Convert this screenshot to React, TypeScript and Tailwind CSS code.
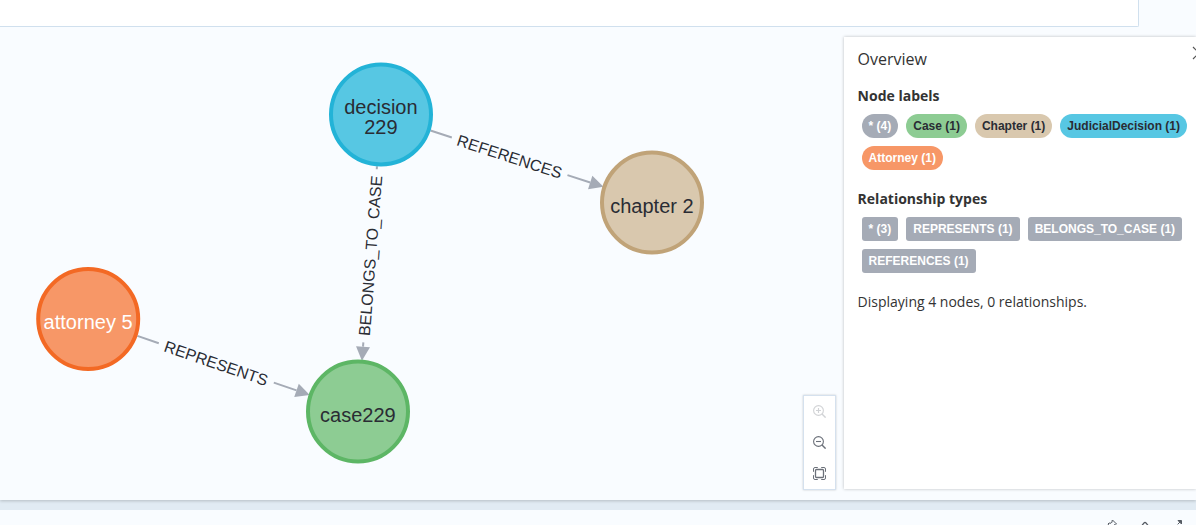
import React from "react";

type GraphNode = { id: string; x: number; y: number; fill: string; stroke: string; color: string; lines: { text: string; y: number }[] };

const nodes: GraphNode[] = [
  { id: "decision", x: 381, y: 114.4, fill: "#57C7E3", stroke: "#23B3D7", color: "#2A2C34", lines: [{ text: "decision", y: 114 }, { text: "229", y: 134 }] },
  { id: "chapter", x: 652, y: 202.6, fill: "#D9C8AE", stroke: "#C0A378", color: "#2A2C34", lines: [{ text: "chapter 2", y: 213 }] },
  { id: "attorney", x: 88.2, y: 319, fill: "#F79767", stroke: "#F36924", color: "#FFFFFF", lines: [{ text: "attorney 5", y: 329 }] },
  { id: "case", x: 358, y: 411.5, fill: "#8DCC93", stroke: "#5DB665", color: "#2A2C34", lines: [{ text: "case229", y: 422 }] },
];

type Edge = { from: number; to: number; label: string; width: number; flip?: boolean };

const edges: Edge[] = [
  { from: 0, to: 1, label: "REFERENCES", width: 109 },
  { from: 2, to: 3, label: "REPRESENTS", width: 109 },
  { from: 0, to: 3, label: "BELONGS_TO_CASE", width: 161, flip: true },
];

function Relationship({ edge }: { edge: Edge }) {
  const a = nodes[edge.from];
  const b = nodes[edge.to];
  const dx = b.x - a.x;
  const dy = b.y - a.y;
  const length = Math.hypot(dx, dy);
  const angle = (Math.atan2(dy, dx) * 180) / Math.PI;
  const start = 52;
  const tip = length - 51;
  const base = tip - 14;
  const mid = (start + base) / 2 - 0.7;
  const gap = edge.width / 2 + 6.3;
  return (
    <g transform={`translate(${a.x} ${a.y}) rotate(${angle})`}>
      <path d={`M${start} 0H${mid - gap}M${mid + gap} 0H${base}`} stroke="#A5ABB6" strokeWidth="2" />
      <path d={`M${tip} 0L${base} -7V7Z`} fill="#A5ABB6" />
      <text
        transform={edge.flip ? `translate(${mid} 0) rotate(180)` : `translate(${mid} 0)`}
        y="6"
        textAnchor="middle"
        fontSize="16"
        fill="#2A2C34"
      >
        {edge.label}
      </text>
    </g>
  );
}

const labels = [
  { text: "* (4)", style: "bg-[#A5ABB6] text-white" },
  { text: "Case (1)", style: "bg-[#8DCC93] text-[#2A2C34]" },
  { text: "Chapter (1)", style: "bg-[#D9C8AE] text-[#2A2C34]" },
  { text: "JudicialDecision (1)", style: "bg-[#57C7E3] text-[#2A2C34]" },
  { text: "Attorney (1)", style: "bg-[#F79767] text-white" },
];

const types = ["* (3)", "REPRESENTS (1)", "BELONGS_TO_CASE (1)", "REFERENCES (1)"];

const chip = "h-6 px-[7px] font-['Liberation_Sans',sans-serif] text-xs leading-6 font-bold whitespace-nowrap";

function ZoomIcon({ plus }: { plus?: boolean }) {
  return (
    <svg width="13" height="13" viewBox="0 0 13 13" fill="none" stroke="currentColor" strokeWidth="1.1">
      <circle cx="5.5" cy="5.5" r="4.9" />
      <path d={plus ? "M3 5.500h5M5.500 3v5" : "M3 5.500h5"} />
      <path d="M9 9L12.600 12.600" strokeWidth="1.4" />
    </svg>
  );
}

function FitIcon() {
  return (
    <svg width="13" height="13" viewBox="0 0 13 13" fill="none" stroke="currentColor" strokeWidth="1.3">
      <rect x="2.5" y="2.5" width="8" height="8" rx="1" />
      <path strokeWidth="1" d="M.5 4.800V2Q.5 .5 2 .5h2.800M8.200 .5H11Q12.500 .5 12.500 2v2.800M12.500 8.200V11Q12.500 12.500 11 12.500H8.200M4.800 12.500H2Q.5 12.500 .5 11V8.200" />
    </svg>
  );
}

export default function App() {
  return (
    <div className="flex h-[525px] w-[1196px] flex-col overflow-hidden bg-[#E1EBF3] font-['Open_Sans',sans-serif] text-[#333333]">
      <main className="z-10 flex h-[500px] shrink-0 flex-col bg-[#F9FCFF] shadow-[0_1px_3px_rgba(0,0,0,0.2)]">
        <div className="h-[27px] w-[1139px] shrink-0 rounded-br-xs border-r border-b border-[#D0E0EE] bg-white" />
        <div className="flex h-[473px]">
          <svg className="h-[473px] w-[803px] shrink-0 font-['Liberation_Sans',Arial,sans-serif]" viewBox="0 27 803 473">
            {edges.map((edge) => (
              <Relationship key={edge.label} edge={edge} />
            ))}
            {nodes.map((node) => (
              <g key={node.id}>
                <circle cx={node.x} cy={node.y} r="50" fill={node.fill} stroke={node.stroke} strokeWidth="4" />
                {node.lines.map((line) => (
                  <text key={line.text} x={node.x - 0.1} y={line.y} textAnchor="middle" fontSize="20" fill={node.color}>
                    {line.text}
                  </text>
                ))}
              </g>
            ))}
          </svg>
          <div className="mb-[10px] flex h-[95px] w-[33px] shrink-0 flex-col items-center gap-[18px] self-end border border-[#D5E1EE] bg-white pt-[9px] text-[#6B7079] shadow-[0_0_2px_rgba(0,0,0,0.2)]">
            <span className="h-[13px] opacity-30"><ZoomIcon plus /></span>
            <ZoomIcon />
            <FitIcon />
          </div>
          <aside className="mt-[10px] ml-2 flex h-[452px] w-[352px] shrink-0 flex-col bg-white pt-px pl-[13.6px] shadow-[0_0_3px_rgba(0,0,0,0.25)]">
            <header className="flex h-[42px] items-center justify-between">
              <h2 className="text-base leading-6">Overview</h2>
              <svg className="-mt-3 -mr-2 h-4 w-4 shrink-0" viewBox="0 0 16 16" fill="none" stroke="#555" strokeWidth="1.2">
                <path d="M5 2L16 13M5 14L16 3" />
              </svg>
            </header>
            <h3 className="mt-1.5 text-sm leading-5 font-bold">Node labels</h3>
            <div className="mt-2 ml-1 flex flex-wrap gap-2">
              {labels.map((label) => (
                <span key={label.text} className={`${chip} rounded-full ${label.style}`}>{label.text}</span>
              ))}
            </div>
            <h3 className="mt-[19px] text-sm leading-5 font-bold">Relationship types</h3>
            <div className="mt-2 ml-1 flex flex-wrap gap-2">
              {types.map((type) => (
                <span key={type} className={`${chip} rounded-[3px] bg-[#A5ABB6] text-white`}>{type}</span>
              ))}
            </div>
            <p className="mt-[19px] text-sm leading-5">Displaying 4 nodes, 0 relationships.</p>
          </aside>
        </div>
      </main>
      <footer className="mt-[10px] flex h-[15px] shrink-0 items-start justify-end gap-[22px] overflow-hidden bg-[#F9FCFF] pt-[9px] pr-[11px] text-[#555A62]">
        <svg width="12" height="12" viewBox="0 0 12 12" fill="none" stroke="currentColor">
          <path d="M7.500 1l4 4-1 .8-1-.3-2 2 .2 2-1.200 1L3 5l1-1 2 .2 1.200-1.200-.3-1z" />
        </svg>
        <svg width="12" height="12" viewBox="0 0 12 12" fill="none" stroke="currentColor" strokeWidth="1.200">
          <path d="M2.500 7L5 4Q6 2.800 7 4L9.500 7" />
        </svg>
        <svg width="12" height="12" viewBox="0 0 12 12" fill="none" stroke="currentColor">
          <path d="M5 1.500H8.500V5z" fill="currentColor" />
          <path d="M7.500 2.500L1 9" strokeDasharray="4 1" />
        </svg>
      </footer>
    </div>
  );
}
